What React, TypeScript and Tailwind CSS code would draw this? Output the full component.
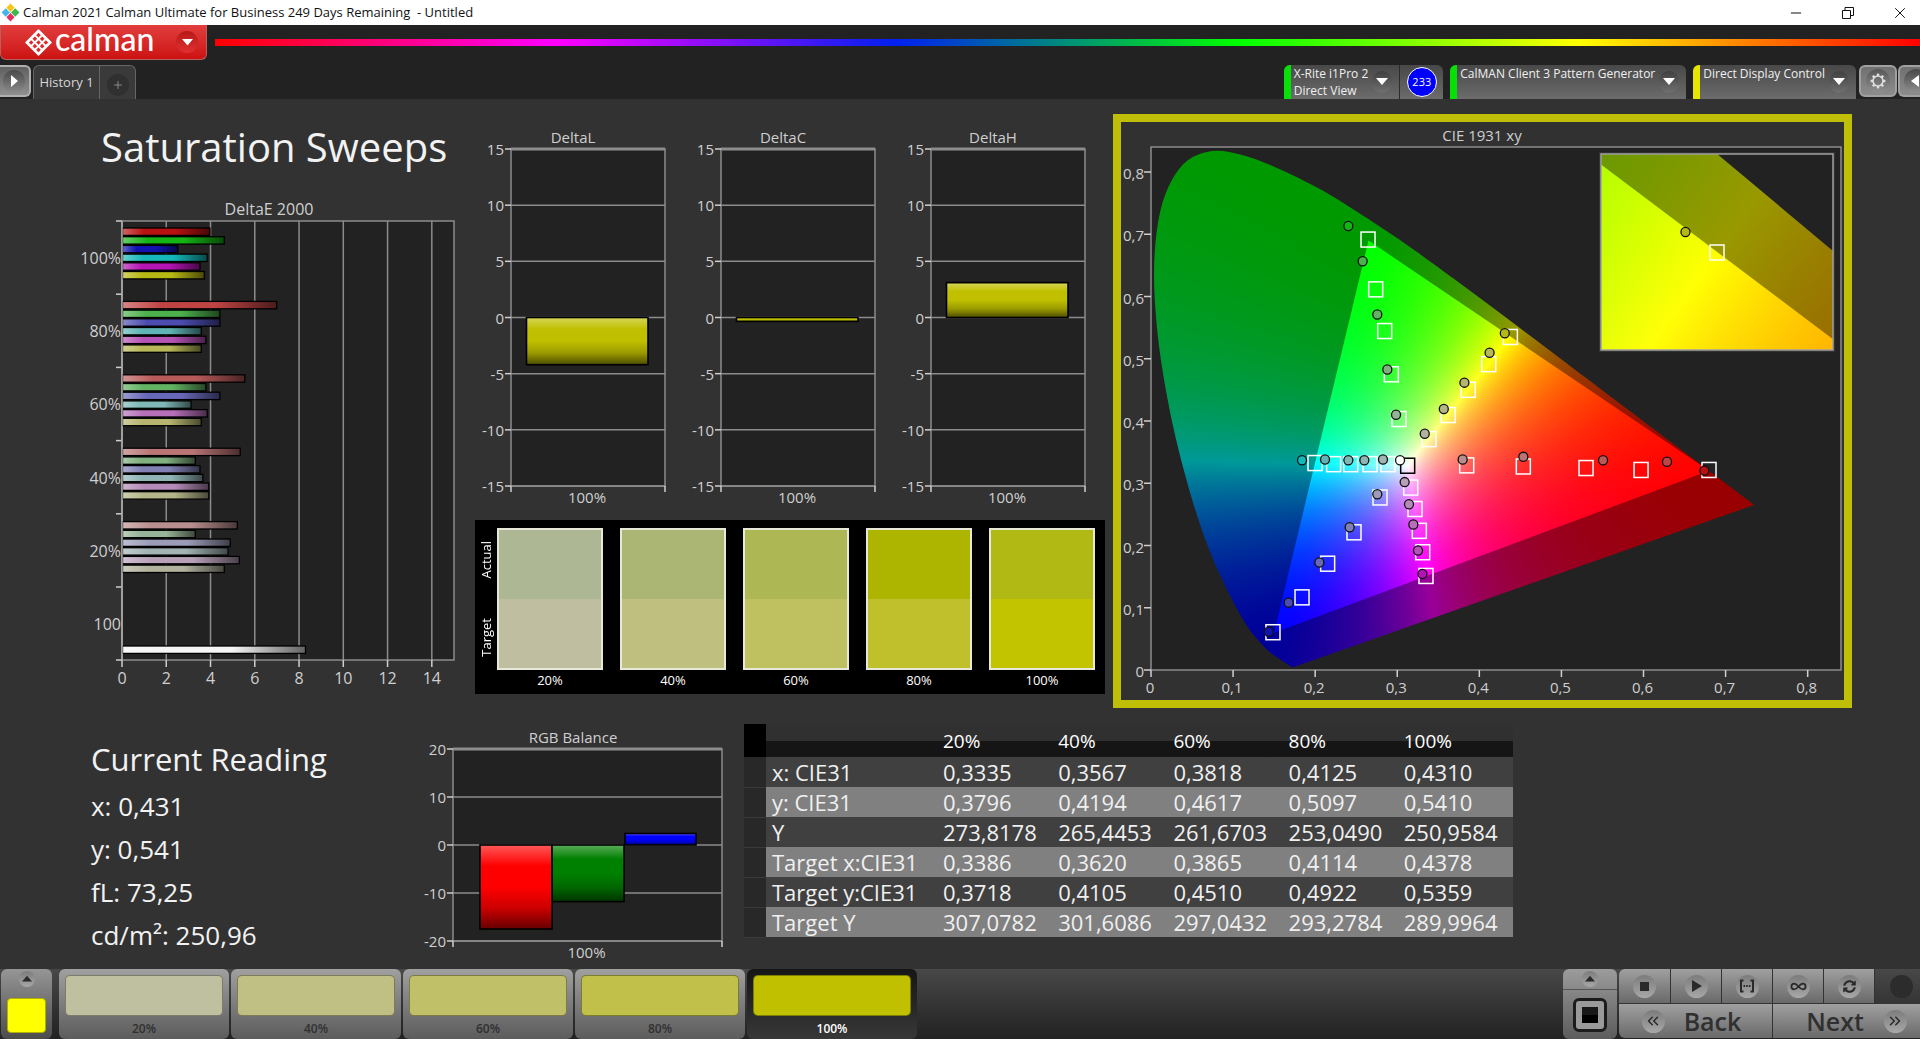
import React from 'react';
import { ChevronsLeft, ChevronsRight, Infinity as InfinityIcon, Minus, Plus, X } from 'lucide-react';
import { FaSyncAlt } from 'react-icons/fa';

type Point = [number, number];

interface Plot {
  xMin: number;
  xMax: number;
  yMin: number;
  yMax: number;
  width: number;
  height: number;
}

const levels = ['100%', '80%', '60%', '40%', '20%'];

// rows: saturation level, columns: red, green, blue, cyan, magenta, yellow
const palette = [
  ['#b81111', '#14b414', '#1212b0', '#14b8b8', '#b414b4', '#b8b814'],
  ['#c04444', '#4cb04c', '#4c4cb0', '#5fb5b5', '#b552b5', '#b8b858'],
  ['#b95a5a', '#62b262', '#6868b8', '#80b8b8', '#b570b9', '#b5b570'],
  ['#b97474', '#80b080', '#8080b4', '#90b4b4', '#b58cb9', '#b5b58a'],
  ['#b98e8e', '#98b498', '#9c9cb8', '#a2b4b4', '#b8a0b8', '#b2b29e']
];

const deltaE = [
  [3.95, 4.6, 2.5, 3.83, 3.5, 3.7],
  [6.97, 4.4, 4.4, 3.56, 3.77, 3.56],
  [5.53, 3.77, 4.4, 3.1, 3.83, 3.56],
  [5.32, 3.29, 3.5, 3.63, 3.9, 3.9],
  [5.19, 3.29, 4.87, 4.77, 5.28, 4.6]
];

const targets: Point[][] = [
  [[0.6798, 0.3222], [0.2644, 0.6924], [0.1486, 0.0615], [0.1998, 0.3333], [0.335, 0.1519], [0.4378, 0.5359]],
  [[0.597, 0.3222], [0.2737, 0.6124], [0.184, 0.1175], [0.2225, 0.3315], [0.331, 0.19], [0.4114, 0.4922]],
  [[0.53, 0.3253], [0.2847, 0.5454], [0.2152, 0.1716], [0.2433, 0.3315], [0.3269, 0.2244], [0.3865, 0.451]],
  [[0.4536, 0.3278], [0.2928, 0.4759], [0.2473, 0.222], [0.2668, 0.3315], [0.3216, 0.2595], [0.362, 0.4105]],
  [[0.3846, 0.3296], [0.3021, 0.404], [0.279, 0.278], [0.2887, 0.3315], [0.3164, 0.2939], [0.3386, 0.3718]]
];

const actuals: Point[][] = [
  [[0.6741, 0.3204], [0.2404, 0.7133], [0.1434, 0.0615], [0.184, 0.337], [0.3306, 0.1544], [0.431, 0.541]],
  [[0.6286, 0.3345], [0.2579, 0.6567], [0.1677, 0.1082], [0.212, 0.3382], [0.3253, 0.1919], [0.4125, 0.5097]],
  [[0.5507, 0.337], [0.2757, 0.5712], [0.2051, 0.1728], [0.2404, 0.337], [0.3196, 0.2337], [0.3818, 0.4617]],
  [[0.4536, 0.3425], [0.2879, 0.4827], [0.242, 0.2294], [0.2599, 0.337], [0.3143, 0.2663], [0.3567, 0.4194]],
  [[0.3797, 0.3382], [0.2985, 0.4101], [0.2757, 0.2823], [0.2826, 0.3382], [0.309, 0.3019], [0.3335, 0.3796]]
];

const whiteTarget: Point = [0.3127, 0.329];
const whiteActual: Point = [0.3034, 0.337];

// CIE 1931 2 degree spectral locus
const locus: Point[] = [
  [0.1741, 0.005], [0.1714, 0.0051], [0.1644, 0.0109], [0.1566, 0.0177], [0.144, 0.0297], [0.1241, 0.0578],
  [0.1096, 0.0868], [0.0913, 0.1327], [0.0687, 0.2007], [0.0454, 0.295], [0.0235, 0.4127], [0.0082, 0.5384],
  [0.0039, 0.6548], [0.0139, 0.7502], [0.0389, 0.812], [0.0743, 0.8338], [0.1142, 0.8262], [0.1547, 0.8059],
  [0.1929, 0.7816], [0.2296, 0.7543], [0.3016, 0.6923], [0.3731, 0.6245], [0.4441, 0.5547], [0.5125, 0.4866],
  [0.5752, 0.4242], [0.627, 0.3725], [0.6658, 0.334], [0.6915, 0.3083], [0.719, 0.2809], [0.7347, 0.2653]
];

// P3 primaries, with X+Y+Z of each at full drive
const primaries: Point[] = [[0.68, 0.32], [0.265, 0.69], [0.15, 0.06]];
const primarySums = [0.7156, 1.0025, 1.3215];
const contrast = 1.35;

const swatches = [
  { label: '20%', actual: '#adb793', target: '#bfbea0' },
  { label: '40%', actual: '#abb674', target: '#bfbf80' },
  { label: '60%', actual: '#adb753', target: '#bfc05f' },
  { label: '80%', actual: '#adb500', target: '#bfc02c' },
  { label: '100%', actual: '#b1ba14', target: '#c3c400' }
];

const tableRows = [
  ['x: CIE31', '0,3335', '0,3567', '0,3818', '0,4125', '0,4310'],
  ['y: CIE31', '0,3796', '0,4194', '0,4617', '0,5097', '0,5410'],
  ['Y', '273,8178', '265,4453', '261,6703', '253,0490', '250,9584'],
  ['Target x:CIE31', '0,3386', '0,3620', '0,3865', '0,4114', '0,4378'],
  ['Target y:CIE31', '0,3718', '0,4105', '0,4510', '0,4922', '0,5359'],
  ['Target Y', '307,0782', '301,6086', '297,0432', '293,2784', '289,9964']
];

const patches = [
  { label: '20%', color: '#bfc0a0' },
  { label: '40%', color: '#c0bf84' },
  { label: '60%', color: '#c0c068' },
  { label: '80%', color: '#c0c04a' },
  { label: '100%', color: '#c0c000' }
];

function project(p: Point, plot: Plot): Point {
  return [
    ((p[0] - plot.xMin) / (plot.xMax - plot.xMin)) * plot.width,
    ((plot.yMax - p[1]) / (plot.yMax - plot.yMin)) * plot.height
  ];
}

// Catmull-Rom through the points
function smooth(points: Point[]): Point[] {
  const out: Point[] = [];
  for (let i = 0; i < points.length - 1; i++) {
    const a = points[Math.max(i - 1, 0)];
    const b = points[i];
    const c = points[i + 1];
    const d = points[Math.min(i + 2, points.length - 1)];
    for (let s = 0; s < 6; s++) {
      const t = s / 6;
      const at = (k: 0 | 1) =>
        0.5 *
        (2 * b[k] +
          (c[k] - a[k]) * t +
          (2 * a[k] - 5 * b[k] + 4 * c[k] - d[k]) * t * t +
          (3 * b[k] - a[k] - 3 * c[k] + d[k]) * t * t * t);
      out.push([at(0), at(1)]);
    }
  }
  out.push(points[points.length - 1]);
  return out;
}

function clipPolygon(points: Point[], plot: Plot) {
  const list = points.map((p) => {
    const [x, y] = project(p, plot);
    return `${x.toFixed(2)}px ${y.toFixed(2)}px`;
  });
  return `polygon(${list.join(', ')})`;
}

// The ratio of two channels is constant along every line through the third primary,
// so a conic gradient centred there draws it. Taking the darkest of the three per
// channel gives RGB / max(R, G, B).
function channelGradient(apex: number, plot: Plot) {
  const from = (apex + 2) % 3;
  const to = (apex + 1) % 3;
  const center = project(primaries[apex], plot);

  const angleOf = (wf: number, wt: number) => {
    const a = wf * primarySums[from];
    const b = wt * primarySums[to];
    const [x, y] = project(
      [
        (a * primaries[from][0] + b * primaries[to][0]) / (a + b),
        (a * primaries[from][1] + b * primaries[to][1]) / (a + b)
      ],
      plot
    );
    return ((Math.atan2(x - center[0], center[1] - y) * 180) / Math.PI + 360) % 360;
  };

  const start = angleOf(1, 0);
  const stops: { angle: number; color: string }[] = [];
  const push = (wf: number, wt: number) => {
    const rgb = [255, 255, 255];
    rgb[from] = Math.round(255 * wf ** contrast);
    rgb[to] = Math.round(255 * wt ** contrast);
    let angle = angleOf(wf, wt) - start;
    if (angle > 180) angle -= 360;
    if (angle < -180) angle += 360;
    stops.push({ angle, color: `rgb(${rgb.join(',')})` });
  };
  for (let i = 0; i <= 12; i++) push(1, i / 12);
  for (let i = 11; i >= 0; i--) push(i / 12, 1);
  if (stops[stops.length - 1].angle < 0) stops.reverse();

  const first = stops[0].angle;
  const span = stops[stops.length - 1].angle - first;
  const lead = (360 - span) / 2;
  const list = stops.map((s) => `${s.color} ${(s.angle - first + lead).toFixed(3)}deg`);
  return `conic-gradient(from ${(start + first - lead).toFixed(3)}deg at ${center[0].toFixed(2)}px ${center[1].toFixed(2)}px, ${list.join(', ')})`;
}

function ColorField({ plot }: { plot: Plot }) {
  const background = [0, 1, 2].map((i) => channelGradient(i, plot)).join(', ');
  return (
    <div className="relative h-full w-full overflow-hidden bg-[#222222]">
      <div
        className="absolute inset-0 bg-blend-darken brightness-60"
        style={{ backgroundImage: background, clipPath: clipPolygon(smooth(locus), plot) }}
      />
      <div
        className="absolute inset-0 bg-blend-darken"
        style={{ backgroundImage: background, clipPath: clipPolygon(primaries, plot) }}
      />
    </div>
  );
}

function TargetMark({ at, stroke = '#ffffff' }: { at: Point; stroke?: string }) {
  return <rect x={at[0] - 7} y={at[1] - 7} width="14" height="15" fill="none" stroke={stroke} strokeWidth="1.5" />;
}

function ReadingMark({ at, fill }: { at: Point; fill: string }) {
  return <ellipse cx={at[0]} cy={at[1]} rx="4.5" ry="4.6" fill={fill} stroke="#111111" strokeWidth="1.3" />;
}

function CieChart() {
  const main: Plot = { xMin: 0, xMax: 0.8406, yMin: 0, yMax: 0.8403, width: 690, height: 523 };
  const focus = targets[0][5];
  const inset: Plot = {
    xMin: focus[0] - 0.025,
    xMax: focus[0] + 0.025,
    yMin: focus[1] - 0.025,
    yMax: focus[1] + 0.025,
    width: 232,
    height: 196
  };
  const ticks = [0, 0.1, 0.2, 0.3, 0.4, 0.5, 0.6, 0.7, 0.8];
  const format = (v: number) => String(v).replace('.', ',');

  return (
    <section className="border-8 border-[#bfbf08] bg-[#313131]">
      <svg viewBox="0 0 723 578" className="block w-full text-[15px]" fill="#cfcfcf">
        <text x="361" y="13" textAnchor="middle" dominantBaseline="central">CIE 1931 xy</text>
        <rect x="30" y="25" width="690" height="523" fill="#222222" />
        <foreignObject x="30" y="25" width="690" height="523">
          <ColorField plot={main} />
        </foreignObject>
        <rect x="30" y="25" width="690" height="523" fill="none" stroke="#8c8c8c" strokeWidth="1.5" />
        {ticks.map((v) => {
          const [x] = project([v, 0], main);
          const [, y] = project([0, v], main);
          return (
            <g key={v}>
              <path d={`M${30 + x} 548v7M30 ${25 + y}h-7`} stroke="#cfcfcf" strokeWidth="1.5" />
              <text x={29 + x} y="565" textAnchor="middle" dominantBaseline="central">{format(v)}</text>
              <text x="23" y={26 + y} textAnchor="end" dominantBaseline="central">{format(v)}</text>
            </g>
          );
        })}
        <g transform="translate(30 25)">
          {targets.map((row, i) => row.map((p, j) => <TargetMark key={`${i}-${j}`} at={project(p, main)} />))}
          <TargetMark at={project(whiteTarget, main)} stroke="#000000" />
          {actuals.map((row, i) =>
            row.map((p, j) => <ReadingMark key={`${i}-${j}`} at={project(p, main)} fill={palette[i][j]} />)
          )}
          <ReadingMark at={project(whiteActual, main)} fill="#ffffff" />
        </g>
        <rect x="478" y="30" width="236" height="200" fill="#333333" />
        <foreignObject x="480" y="32" width="232" height="196">
          <ColorField plot={inset} />
        </foreignObject>
        <rect x="480" y="32" width="232" height="196" fill="none" stroke="#a0a0a0" strokeWidth="1.5" />
        <g transform="translate(480 32)">
          <TargetMark at={project(focus, inset)} />
          <ReadingMark at={project(actuals[0][5], inset)} fill={palette[0][5]} />
        </g>
      </svg>
    </section>
  );
}

function BarShades() {
  return (
    <svg className="absolute h-0 w-0" aria-hidden="true">
      <defs>
        <linearGradient id="shade-x" x1="0" y1="0" x2="1" y2="0">
          <stop offset="0" stopColor="#fff" stopOpacity="0.35" />
          <stop offset="0.25" stopColor="#fff" stopOpacity="0" />
          <stop offset="0.6" stopColor="#000" stopOpacity="0" />
          <stop offset="1" stopColor="#000" stopOpacity="0.6" />
        </linearGradient>
        <linearGradient id="shade-y" x1="0" y1="0" x2="0" y2="1">
          <stop offset="0" stopColor="#fff" stopOpacity="0.35" />
          <stop offset="0.25" stopColor="#fff" stopOpacity="0" />
          <stop offset="0.5" stopColor="#000" stopOpacity="0" />
          <stop offset="0.75" stopColor="#000" stopOpacity="0.2" />
          <stop offset="1" stopColor="#000" stopOpacity="0.6" />
        </linearGradient>
      </defs>
    </svg>
  );
}

function DeltaEChart() {
  const x = (v: number) => 122 + v * 22.13;
  return (
    <svg viewBox="0 0 475 498" className="block w-full text-[16px]" fill="#cfcfcf">
      <text x="269" y="14" textAnchor="middle" dominantBaseline="central">DeltaE 2000</text>
      <rect x="122" y="26" width="332" height="439" fill="#222222" stroke="#8c8c8c" strokeWidth="1.5" />
      {[0, 2, 4, 6, 8, 10, 12, 14].map((v) => (
        <g key={v}>
          <path d={`M${x(v)} 26V465`} stroke="#8c8c8c" strokeWidth="1.5" />
          <path d={`M${x(v)} 465v7`} stroke="#cfcfcf" strokeWidth="1.5" />
          <text x={x(v)} y="483" textAnchor="middle" dominantBaseline="central">{v}</text>
        </g>
      ))}
      {[...levels, '100'].map((label, i) => (
        <g key={label}>
          <path d={`M122 ${26 + i * 73.2}h-6`} stroke="#cfcfcf" strokeWidth="1.5" />
          <text x="121" y={63 + i * 73.2} textAnchor="end" dominantBaseline="central">{label}</text>
        </g>
      ))}
      <path d="M122 465h-6" stroke="#cfcfcf" strokeWidth="1.5" />
      {deltaE.map((row, i) =>
        row.map((v, j) => {
          const box = { x: 122.5, y: 33 + i * 73.4 + j * 8.7, width: v * 22.13, height: 7.4 };
          return (
            <g key={`${i}-${j}`}>
              <rect {...box} fill={palette[i][j]} />
              <rect {...box} fill="url(#shade-x)" stroke="#000000" strokeWidth="1.3" />
            </g>
          );
        })
      )}
      <rect x="122.5" y="451" width="183" height="7.4" fill="#f4f4f4" />
      <rect x="122.5" y="451" width="183" height="7.4" fill="url(#shade-x)" stroke="#000000" strokeWidth="1.3" />
      <path d="M122 26V465" stroke="#a8a8a8" strokeWidth="1.5" />
    </svg>
  );
}

interface ColumnChartProps {
  title: string;
  titleX: number;
  width: number;
  height: number;
  left: number;
  right: number;
  bottom: number;
  ticks: number[];
  bars: { from: number; to: number; value: number; color: string }[];
}

function ColumnChart({ title, titleX, width, height, left, right, bottom, ticks, bars }: ColumnChartProps) {
  const top = 25;
  const max = ticks[0];
  const y = (v: number) => top + ((max - v) / (2 * max)) * (bottom - top);
  return (
    <svg viewBox={`0 0 ${width} ${height}`} className="block w-full text-[15px]" fill="#cfcfcf">
      <text x={titleX} y="13" textAnchor="middle" dominantBaseline="central">{title}</text>
      <rect x={left} y={top} width={right - left} height={bottom - top} fill="#222222" stroke="#8c8c8c" strokeWidth="1.5" />
      {ticks.map((v) => (
        <g key={v}>
          <path d={`M${left} ${y(v)}H${right}`} stroke="#8c8c8c" strokeWidth="1.5" />
          <path d={`M${left} ${y(v)}h-6`} stroke="#cfcfcf" strokeWidth="1.5" />
          <text x={left - 7} y={y(v)} textAnchor="end" dominantBaseline="central">{v}</text>
        </g>
      ))}
      <path d={`M${left} ${top}H${right}`} stroke="#8c8c8c" strokeWidth="3" />
      <path d={`M${left} ${bottom}v6M${right} ${bottom}v6`} stroke="#cfcfcf" strokeWidth="1.5" />
      {bars.map((bar) => {
        const box = {
          x: bar.from,
          y: Math.min(y(0), y(bar.value)),
          width: bar.to - bar.from,
          height: Math.abs(y(bar.value) - y(0))
        };
        return (
          <g key={bar.from}>
            <rect {...box} fill={bar.color} />
            <rect {...box} fill="url(#shade-y)" stroke="#000000" strokeWidth="1.6" />
          </g>
        );
      })}
      <text x={(left + right) / 2 - 1} y={bottom + 11} textAnchor="middle" dominantBaseline="central">100%</text>
    </svg>
  );
}

function DeltaChart({ title, value }: { title: string; value: number }) {
  return (
    <ColumnChart
      title={title}
      titleX={98}
      width={210}
      height={384}
      left={36}
      right={190}
      bottom={362}
      ticks={[15, 10, 5, 0, -5, -10, -15]}
      bars={[{ from: 51.5, to: 173, value, color: '#c0c000' }]}
    />
  );
}

function SwatchPanel() {
  return (
    <section className="mt-3 flex bg-black pt-2 pr-2.5 pb-1 text-[13px] leading-5 text-white">
      <div className="flex h-[142px] w-[22px] shrink-0 flex-col items-center justify-between py-[13px]">
        <span className="rotate-180 [writing-mode:vertical-rl]">Actual</span>
        <span className="rotate-180 [writing-mode:vertical-rl]">Target</span>
      </div>
      <div className="grid flex-1 grid-cols-5 gap-[17px]">
        {swatches.map((s) => (
          <div key={s.label} className="text-center">
            <div className="h-[142px] border-2 border-[#e8e8d8]">
              <div className="h-1/2" style={{ backgroundColor: s.actual }} />
              <div className="h-1/2" style={{ backgroundColor: s.target }} />
            </div>
            {s.label}
          </div>
        ))}
      </div>
    </section>
  );
}

function DataTable() {
  return (
    <table className="w-full table-fixed border-collapse self-start text-left text-[22px] leading-[30px] text-[#f0f0f0]">
      <thead>
        <tr className="h-[33px] bg-linear-to-b from-[#303030] from-50% to-[#151515] to-50% text-[19px] text-white">
          <th className="w-[22px] bg-black" />
          <th className="w-[171px]" />
          {swatches.map((s) => (
            <th key={s.label} className="pl-1.5 font-normal">{s.label}</th>
          ))}
        </tr>
      </thead>
      <tbody>
        {tableRows.map((row, i) => (
          <tr key={row[0]} className={`h-[30px] ${i % 2 ? 'bg-[#808080]' : 'bg-[#404040]'}`}>
            <td className="border-b border-[#3a3a3a] bg-[#282828]" />
            {row.map((cell) => (
              <td key={cell} className="pl-1.5 whitespace-nowrap">{cell}</td>
            ))}
          </tr>
        ))}
      </tbody>
    </table>
  );
}

function TriangleIcon({ className, points = '0,0 12,0 6,7' }: { className?: string; points?: string }) {
  return (
    <svg viewBox="0 0 12 12" className={className} fill="currentColor" aria-hidden="true">
      <polygon points={points} />
    </svg>
  );
}

function TitleBar() {
  return (
    <div className="flex h-[25px] items-center bg-white text-[13px] text-[#111111]">
      <svg viewBox="0 0 20 20" className="mx-px h-[19px] w-[19px]" aria-hidden="true">
        <path d="M10 0.5l4.3 4.6L10 9.6 5.7 5z" fill="#f6c516" />
        <path d="M5 5.6L9.4 10 5 14.5.6 10z" fill="#45b5e8" />
        <path d="M15 5.6l4.4 4.4L15 14.5 10.6 10z" fill="#3fb54a" />
        <path d="M10 10.5l4.3 4.5L10 19.5 5.7 15z" fill="#e5305f" />
      </svg>
      <span className="ml-[2px] whitespace-pre">Calman 2021 Calman Ultimate for Business 249 Days Remaining  - Untitled</span>
      <div className="ml-auto flex items-center gap-3">
        <button aria-label="Minimize" className="flex w-10 justify-center"><Minus className="h-4 w-4" strokeWidth={1.5} /></button>
        <button aria-label="Restore" className="flex w-10 justify-center">
          <svg viewBox="0 0 12 12" className="h-3 w-3" fill="none" stroke="currentColor" aria-hidden="true">
            <path d="M.5 3.5h8v8h-8zM3 3.5V.5h8.500v8H8.500" />
          </svg>
        </button>
        <button aria-label="Close" className="flex w-10 justify-center"><X className="h-[18px] w-[18px]" strokeWidth={1.3} /></button>
      </div>
    </div>
  );
}

function CalmanLogo() {
  return (
    <svg viewBox="0 0 28 28" className="h-[27px] w-[27px]" aria-hidden="true">
      <path d="M14 1L27 14 14 27 1 14z" fill="#ffffff" stroke="#ffffff" strokeWidth="1.5" strokeLinejoin="round" />
      <g fill="#dc2a2a">
        {[[14, 6.4], [10.2, 10.2], [17.8, 10.2], [6.4, 14], [14, 14], [21.6, 14], [10.2, 17.8], [17.8, 17.8], [14, 21.6]].map(([x, y]) => (
          <path key={`${x}-${y}`} d={`M${x} ${y - 2.4}l2.400 2.400-2.400 2.400-2.400-2.400z`} />
        ))}
      </g>
    </svg>
  );
}

function DeviceTab({ lines, color, children }: { lines: string[]; color: string; children?: React.ReactNode }) {
  return (
    <div className="flex h-[34px] overflow-hidden rounded-t-md bg-linear-to-b from-[#484848] to-[#6c6c6c]">
      <div className={`w-[7px] ${color}`} />
      <button className="flex gap-1 pr-[7px] pl-[3px] text-left text-[12px] leading-[17px] text-[#f0f0f0]">
        <span>
          {lines.map((line) => (
            <span key={line} className="block whitespace-nowrap">{line}</span>
          ))}
        </span>
        <span className="mt-1.5 flex h-[22px] w-5 items-center justify-center rounded-full bg-linear-to-b from-[#404040] to-[#707070]">
          <TriangleIcon className="mt-1 h-3 w-3 text-white" />
        </span>
      </button>
      {children}
    </div>
  );
}

function Header() {
  return (
    <header className="flex h-[74px] flex-col justify-between bg-[#222222]">
      <div className="flex items-start">
        <button className="flex h-[35px] w-[207px] items-center rounded-b-md border border-t-0 border-[#b86060] bg-linear-to-b from-[#e23c3c] to-[#cc1010] pl-6 text-white">
          <CalmanLogo />
          <span className="ml-[3px] -mt-1.5 font-['Lato'] text-[32px] leading-8 font-medium">calman</span>
          <span className="ml-auto mr-2 flex h-[22px] w-[22px] items-center justify-center rounded-full bg-linear-to-b from-[#b81818] to-[#e03030]">
            <TriangleIcon className="mt-1 h-[11px] w-[11px]" />
          </span>
        </button>
        <div className="mt-[14px] ml-2 h-[7px] flex-1 bg-[linear-gradient(to_right,#ff0000,#ff00ff_20%,#0020f0_40%,#00ff00_60%,#ffff00_80%,#ff0000)]" />
      </div>
      <div className="flex">
        <button aria-label="Expand" className="h-8 w-[31px] rounded-r-md border-2 border-l-0 border-[#b0b0b0] bg-linear-to-b from-[#606060] to-[#909090] pl-[3px]">
          <span className="flex h-[23px] w-[22px] items-center justify-center rounded-full bg-linear-to-b from-[#4a4a4a] to-[#8c8c8c]">
            <TriangleIcon className="h-3 w-3 text-white" points="3,0 10,6 3,12" />
          </span>
        </button>
        <div className="ml-0.5 flex rounded-t-md border border-b-0 border-[#666666] bg-[#3a3a3a] text-[13px] text-[#d8d8d8]">
          <button className="h-[33px] w-[66px] border-r border-[#666666]">History 1</button>
          <button aria-label="Add history" className="flex w-[35px] items-center justify-center">
            <span className="mt-1 flex h-[22px] w-[22px] items-center justify-center rounded-full bg-[#303030]"><Plus className="h-3 w-3 text-[#888888]" strokeWidth={2} /></span>
          </button>
        </div>
        <div className="ml-auto flex gap-[7px]">
          <DeviceTab lines={['X-Rite i1Pro 2', 'Direct View']} color="bg-[#06e006]">
            <div className="flex w-11 items-center justify-center border-l border-[#2c2c2c]">
              <span className="flex h-[30px] w-[30px] items-center justify-center rounded-full border border-white bg-[#0000ff] text-[11px] text-white">233</span>
            </div>
          </DeviceTab>
          <DeviceTab lines={['CalMAN Client 3 Pattern Generator']} color="bg-[#06e006]" />
          <DeviceTab lines={['Direct Display Control']} color="bg-[#e6e600]" />
        </div>
        <button aria-label="Settings" className="ml-[3px] flex h-8 w-[38px] items-center justify-center rounded-md border-2 border-[#a0a0a0] bg-linear-to-b from-[#707070] to-[#8c8c8c]">
          <span className="flex h-6 w-6 items-center justify-center rounded-full bg-linear-to-b from-[#585858] to-[#909090]">
            <svg viewBox="0 0 16 16" className="h-4 w-4" fill="none" stroke="#dedede" aria-hidden="true">
              <circle cx="8" cy="8" r="5" strokeWidth="1.6" />
              {[0, 45, 90, 135, 180, 225, 270, 315].map((deg) => (
                <path key={deg} d="M8 3V.6" strokeWidth="2.400" transform={`rotate(${deg} 8 8)`} />
              ))}
            </svg>
          </span>
        </button>
        <button aria-label="Collapse" className="ml-px flex h-8 w-[22px] items-center overflow-hidden rounded-l-md border-2 border-r-0 border-[#a0a0a0] bg-linear-to-b from-[#707070] to-[#8c8c8c] pl-1">
          <span className="flex h-6 w-6 shrink-0 items-center rounded-full bg-linear-to-b from-[#484848] to-[#909090] pl-1.5">
            <TriangleIcon className="h-3 w-3 text-white" points="9,0 1,6 9,12" />
          </span>
        </button>
      </div>
    </header>
  );
}

function Knob({ children, small }: { children?: React.ReactNode; small?: boolean }) {
  return (
    <span
      className={`flex items-center justify-center rounded-full bg-linear-to-b from-[#7c7c7c] to-[#a8a8a8] text-[#2a2a2a] ${
        small ? 'h-4 w-4' : 'h-[23px] w-[23px]'
      }`}
    >
      {children}
    </span>
  );
}

const key = 'flex items-center justify-center border-r border-[#333333] bg-linear-to-b from-[#a0a0a0] to-[#6a6a6a]';

function Footer() {
  return (
    <footer className="flex h-[70px] bg-linear-to-b from-[#484848] to-[#222222]">
      <button aria-label="Current patch" className="ml-px flex w-[51px] flex-col items-center rounded-md bg-linear-to-b from-[#969696] to-[#4c4c4c] pt-0.5">
        <Knob small><TriangleIcon className="h-2.5 w-2.5" points="0,9 12,9 6,2" /></Knob>
        <span className="mt-[11px] h-[35px] w-[39px] rounded-sm border border-[#b0b000] bg-[#ffff00]" />
      </button>
      <div className="ml-[7px] flex gap-0.5">
        {patches.map((patch, i) => {
          const active = i === patches.length - 1;
          return (
            <button
              key={patch.label}
              className={`flex w-[170px] flex-col items-center rounded-md px-1.5 pt-1.5 text-[12px] leading-[14px] font-semibold ${
                active ? 'bg-linear-to-b from-[#161616] to-[#383838] text-white' : 'bg-linear-to-b from-[#a0a0a0] to-[#5c5c5c] text-[#303030]'
              }`}
            >
              <span className="mb-1.5 h-[41px] w-full rounded-[5px] border border-black/35" style={{ backgroundColor: patch.color }} />
              {patch.label}
            </button>
          );
        })}
      </div>

      <div className="ml-auto flex">
        <div className="mr-0.5 flex w-[54px] flex-col overflow-hidden rounded-md bg-linear-to-b from-[#9c9c9c] to-[#5c5c5c]">
          <button aria-label="More" className="flex h-[21px] items-center justify-center border-b border-[#555555]">
            <Knob small><TriangleIcon className="h-2.5 w-2.5" points="0,9 12,9 6,2" /></Knob>
          </button>
          <button aria-label="Stop" className="flex flex-1 items-center justify-center">
            <span className="flex h-[34px] w-[34px] items-center justify-center rounded-md border-[3px] border-[#1c1c1c] bg-[#9a9a9a]">
              <span className="h-4 w-4 bg-linear-to-b from-[#181818] from-50% to-black to-50%" />
            </span>
          </button>
        </div>
        <div className="flex flex-col">
          <div className="flex h-[34px]">
            <button aria-label="Stop measuring" className={`${key} w-[52px] rounded-tl-md`}><Knob><span className="h-[9px] w-[9px] bg-[#2a2a2a]" /></Knob></button>
            <button aria-label="Play" className={`${key} w-[51px]`}><Knob><TriangleIcon className="h-3 w-3" points="2,0 12,6 2,12" /></Knob></button>
            <button aria-label="Read series" className={`${key} w-[51px]`}>
              <Knob>
                <svg viewBox="0 0 16 14" className="h-3.5 w-4" fill="none" stroke="currentColor" strokeWidth="2" aria-hidden="true">
                  <path d="M4.500 1.500H2v11h2.500M11.500 1.500H14v11h-2.500" />
                  <path d="M4.500 7h1.600M7.200 7h1.600M9.900 7h1.600" />
                </svg>
              </Knob>
            </button>
            <button aria-label="Continuous" className={`${key} w-[51px]`}><Knob><InfinityIcon className="h-[17px] w-[17px]" strokeWidth={2.5} /></Knob></button>
            <button aria-label="Refresh" className={`${key} w-[51px]`}><Knob><FaSyncAlt className="h-[13px] w-[13px]" /></Knob></button>
            <span className="flex w-[45px] items-center pl-[15px]"><span className="h-[23px] w-[23px] rounded-full bg-[#2c2c2c]" /></span>
          </div>
          <div className="mt-px flex h-[34px] text-[25px] leading-8 font-semibold text-[#303030]">
            <button className={`${key} w-[154px] gap-[19px] rounded-bl-md pr-2`}><Knob><ChevronsLeft className="h-[18px] w-[18px]" /></Knob>Back</button>
            <button className={`${key} flex-1 gap-5 border-r-0 pl-5`}>Next<Knob><ChevronsRight className="h-[18px] w-[18px]" /></Knob></button>
          </div>
        </div>
      </div>
    </footer>
  );
}

export default function App() {
  return (
    <div className="flex min-h-screen flex-col bg-[#323232] font-['Open_Sans','Noto_Sans',sans-serif]">
      <BarShades />
      <TitleBar />
      <Header />

      <main className="flex-1 pt-[15px]">
        <div className="grid grid-cols-[475fr_638fr_739fr_68fr]">
          <div>
            <h1 className="mb-[15px] pl-[101px] text-[40px] leading-[66px] whitespace-nowrap text-[#f2f2f2]">Saturation Sweeps</h1>
            <DeltaEChart />
          </div>
          <div className="pt-2.5 pr-2">
            <div className="grid grid-cols-3">
              <DeltaChart title="DeltaL" value={-4.2} />
              <DeltaChart title="DeltaC" value={-0.35} />
              <DeltaChart title="DeltaH" value={3.1} />
            </div>
            <SwatchPanel />
          </div>
          <CieChart />
        </div>

        <div className="mt-4 grid grid-cols-[420fr_324fr_769fr_407fr]">
          <section className="pt-3 pl-[91px] text-[26px] leading-[43px] text-[#f2f2f2]">
            <h2 className="mb-[3px] text-[31px] leading-[46px]">Current Reading</h2>
            <p>x: 0,431</p>
            <p>y: 0,541</p>
            <p>fL: 73,25</p>
            <p>cd/m²: 250,96</p>
          </section>
          <ColumnChart
            title="RGB Balance"
            titleX={153}
            width={324}
            height={240}
            left={33}
            right={302}
            bottom={217}
            ticks={[20, 10, 0, -10, -20]}
            bars={[
              { from: 60, to: 132, value: -17.5, color: '#ff0000' },
              { from: 132, to: 204, value: -11.8, color: '#008000' },
              { from: 205, to: 276, value: 2.4, color: '#0000ff' }
            ]}
          />
          <DataTable />
        </div>
      </main>

      <Footer />
    </div>
  );
}
